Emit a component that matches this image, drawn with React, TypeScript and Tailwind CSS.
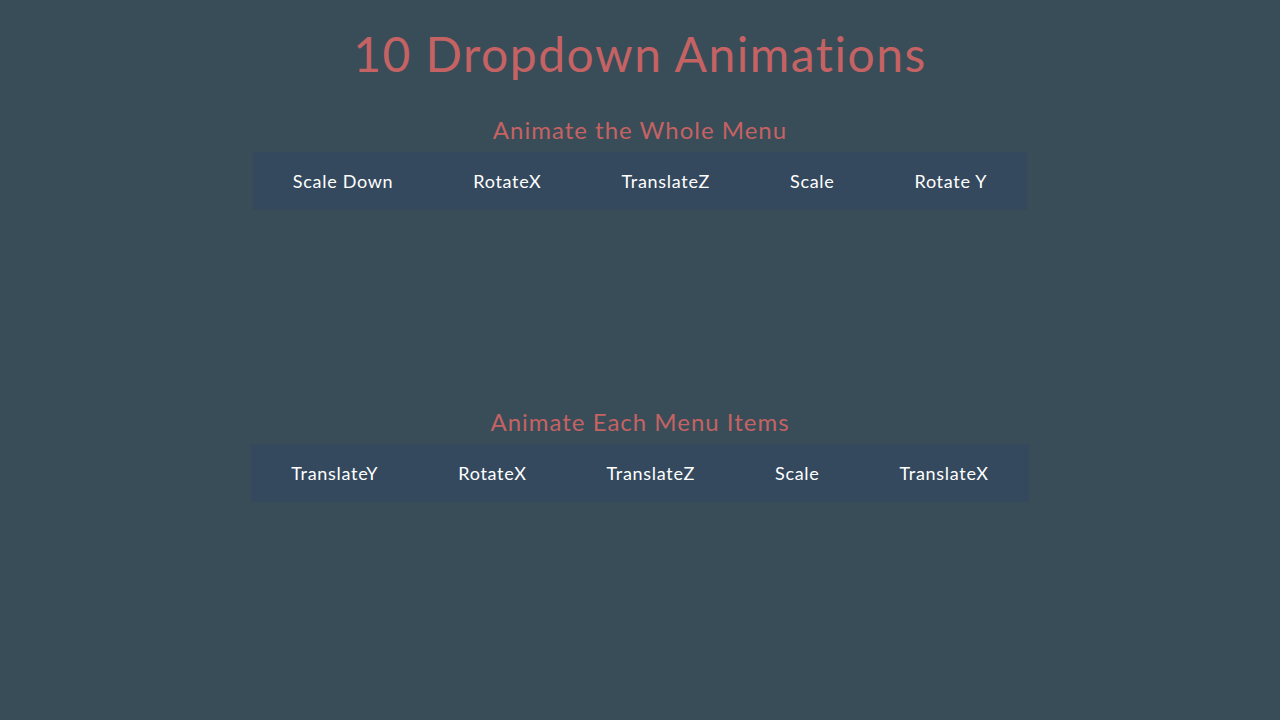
import React from 'react';

const sections = [
  { title: 'Animate the Whole Menu', items: ['Scale Down', 'RotateX', 'TranslateZ', 'Scale', 'Rotate Y'] },
  { title: 'Animate Each Menu Items', items: ['TranslateY', 'RotateX', 'TranslateZ', 'Scale', 'TranslateX'] },
];

export default function App() {
  return (
    <div
      className="min-h-screen bg-[#384d58] flex flex-col items-center"
      style={{ fontFamily: 'Lato, "Noto Sans", sans-serif' }}
    >
      <h1 className="mt-[24px] text-[48px] leading-[60px] text-[#c56263] tracking-[1.5px]">10 Dropdown Animations</h1>

      {sections.map((section, i) => (
        <div key={section.title} className={`flex flex-col items-center ${i === 0 ? 'mt-[30px] h-[292px]' : ''}`}>
          <h2 className="text-[24px] leading-[32px] text-[#c56263] tracking-[1px]">{section.title}</h2>
          {/* Menu */}
          <ul className="mt-[6px] flex bg-[#34495e]">
            {section.items.map((item) => (
              <li key={item} className="px-[40px] h-[58px] flex items-center text-[18px] tracking-[0.7px] text-white">
                {item}
              </li>
            ))}
          </ul>
        </div>
      ))}
    </div>
  );
}
